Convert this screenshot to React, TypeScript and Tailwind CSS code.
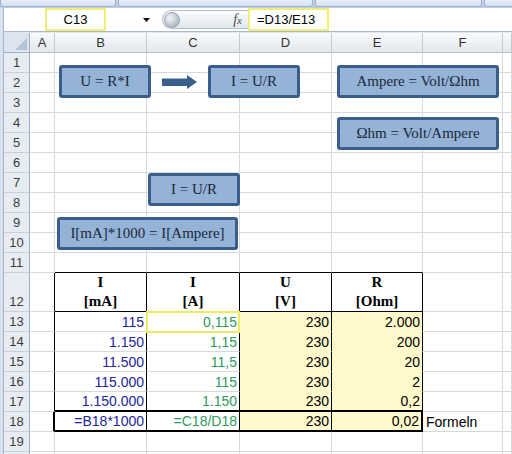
import React from 'react';

const SANS = "font-['Liberation_Sans',Arial,sans-serif]";
const SERIF = "font-['Liberation_Serif','Times_New_Roman',serif]";

const W = ['w-[25px]', 'w-[92px]', 'w-[93px]', 'w-[92px]', 'w-[91px]', 'w-[80px]', 'flex-1'];
const LETTERS = ['A', 'B', 'C', 'D', 'E', 'F', ''];

const GR = 'border-r border-r-[#d6dae0]';
const GB = 'border-b border-b-[#d6dae0]';
const YEL = 'bg-[#fff9cc]';
const BLUE = 'text-[#24249a]';
const GREEN = 'text-[#2f9a5c]';

type Spec = { r: string; b: string; bg: string; content: React.ReactNode; sel?: boolean };

function Num({ v, color = 'text-black' }: { v: string; color?: string }) {
  return (
    <div className={`h-full flex items-end justify-end pr-[2px] leading-[17px] text-[14px] ${color}`}>{v}</div>
  );
}

function Head({ a, b }: { a: string; b: string }) {
  return (
    <div className={`h-full flex flex-col justify-end items-center ${SERIF} font-bold text-[15px] leading-[19px] text-black`}>
      <span>{a}</span>
      <span>{b}</span>
    </div>
  );
}

const DATA: Record<number, string[]> = {
  13: ['115', '0,115', '230', '2.000'],
  14: ['1.150', '1,15', '230', '200'],
  15: ['11.500', '11,5', '230', '20'],
  16: ['115.000', '115', '230', '2'],
  17: ['1.150.000', '1.150', '230', '0,2'],
  18: ['=B18*1000', '=C18/D18', '230', '0,02'],
};

function specsFor(row: number): Spec[] {
  const s: Spec[] = W.map(() => ({ r: GR, b: GB, bg: '', content: null }));
  if (row === 11) for (let i = 1; i <= 4; i++) s[i].b = 'border-b border-b-black';
  if (row >= 12 && row <= 17) {
    s[0].r = 'border-r border-r-black';
    for (let i = 1; i <= 4; i++) s[i].r = 'border-r border-r-black';
  }
  if (row === 12) {
    for (let i = 1; i <= 4; i++) s[i].b = 'border-b border-b-black';
    s[1].content = <Head a="I" b="[mA]" />;
    s[2].content = <Head a="I" b="[A]" />;
    s[3].content = <Head a="U" b="[V]" />;
    s[4].content = <Head a="R" b="[Ohm]" />;
  }
  if (row >= 13 && row <= 18) {
    const d = DATA[row];
    s[1].content = <Num v={d[0]} color={BLUE} />;
    s[2].content = <Num v={d[1]} color={GREEN} />;
    s[3].content = <Num v={d[2]} />;
    s[4].content = <Num v={d[3]} />;
    s[3].bg = YEL;
    s[4].bg = YEL;
    if (row <= 16) {
      s[3].b = 'border-b border-b-[#fff9cc]';
      s[4].b = 'border-b border-b-[#fff9cc]';
    }
  }
  if (row === 13) s[2].sel = true;
  if (row === 17) for (let i = 1; i <= 4; i++) s[i].b = 'border-b-2 border-b-black';
  if (row === 18) {
    s[0].r = 'border-r-2 border-r-black';
    for (let i = 1; i <= 3; i++) s[i].r = 'border-r border-r-black';
    s[4].r = 'border-r-2 border-r-black';
    for (let i = 1; i <= 4; i++) s[i].b = 'border-b-2 border-b-black';
    s[5].content = (
      <div className="h-full flex items-end pl-[3px] leading-[17px] text-[14px] text-black">Formeln</div>
    );
  }
  return s;
}

function Row({ n, label = true }: { n: number; label?: boolean }) {
  const specs = specsFor(n);
  const h = n === 12 ? 'h-[39px]' : 'h-[20px]';
  return (
    <div className={`flex ${h} shrink-0`}>
      <div className="w-[26px] shrink-0 h-full flex items-end justify-center pb-[1px] leading-[17px] text-[13px] text-[#3c3c3c] bg-[#e7ecf3] border-r border-r-[#9fb1c6] border-b border-b-[#c6ced9]">
        {label ? n : ''}
      </div>
      {specs.map((s, i) => (
        <div key={i} className={`${W[i]} shrink-0 h-full ${s.sel ? 'relative' : ''} ${s.r} ${s.b} ${s.bg}`}>
          {s.content}
          {s.sel && (
            <div className="absolute -left-[1px] -top-[1px] -right-[1px] -bottom-[2px] border-2 border-[#eeec5e] z-10" />
          )}
        </div>
      ))}
    </div>
  );
}

function Shape({ cls, children }: { cls: string; children: React.ReactNode }) {
  return (
    <div
      className={`absolute flex items-center justify-center border-[3px] border-[#3a5e8b] bg-[#95b3d7] rounded-[3px] text-[15px] text-[#1a2838] whitespace-nowrap ${SERIF} ${cls}`}
    >
      {children}
    </div>
  );
}

export default function App() {
  const rows = Array.from({ length: 19 }, (_, i) => i + 1);
  return (
    <div className={`relative w-[512px] h-[454px] overflow-hidden bg-white ${SANS} flex flex-col`}>
      {/* ribbon bottom */}
      <div className="h-[8px] shrink-0 flex gap-[2px] bg-[#bccde4]">
        <div className="w-[116px] h-[7px] bg-linear-to-b from-[#e6eef8] to-[#d5e1f0] border border-t-0 border-[#9fb4d0] rounded-b-[3px]" />
        <div className="w-[195px] h-[7px] bg-linear-to-b from-[#e6eef8] to-[#d5e1f0] border border-t-0 border-[#9fb4d0] rounded-b-[3px]" />
        <div className="w-[167px] h-[7px] bg-linear-to-b from-[#e6eef8] to-[#d5e1f0] border border-t-0 border-[#9fb4d0] rounded-b-[3px]" />
        <div className="flex-1 h-[7px] bg-linear-to-b from-[#e6eef8] to-[#d5e1f0] border border-t-0 border-r-0 border-[#9fb4d0] rounded-bl-[3px]" />
      </div>
      <div className="flex flex-1 min-h-0">
        {/* window left edge */}
        <div className="w-[4px] shrink-0 bg-[#d8e2ee] border-r border-r-[#a3b4c9]" />
        <div className="flex-1 flex flex-col min-w-0 overflow-hidden">
          {/* formula bar */}
          <div className="h-[24px] shrink-0 flex items-stretch bg-white border-b border-b-[#a9b7c9]">
            <div className="w-[41px] shrink-0" />
            <div className="w-[61px] shrink-0 border-2 border-[#f1ef72] flex items-center justify-center text-[13px] text-black">
              C13
            </div>
            <div className="w-[44px] shrink-0 flex items-center justify-end">
              <svg width="7" height="4" viewBox="0 0 7 4">
                <path d="M0 0 L7 0 L3.5 4 Z" fill="#111" />
              </svg>
            </div>
            <div className="w-[12px] shrink-0" />
            <div className="w-[86px] shrink-0 my-[2px] flex items-center rounded-l-full border border-r-0 border-[#b3bfcd] bg-linear-to-b from-[#fbfcfd] to-[#e1e7ee]">
              <div className="w-[16px] h-[16px] ml-[1px] rounded-full border border-[#9aa6b4] bg-radial-[at_35%_35%] from-[#f4f6f8] via-[#c5ccd5] to-[#98a3b0]" />
              <div className="flex-1" />
              <span className={`${SERIF} italic text-[14px] text-[#4a4a4a] pr-[6px] leading-none`}>
                f<span className="text-[11px]">x</span>
              </span>
            </div>
            <div className="w-[81px] shrink-0 border-2 border-[#f1ef72] flex items-center pl-[7px] text-[13px] text-black">
              =D13/E13
            </div>
            <div className="flex-1" />
          </div>
          <div className="h-[1px] shrink-0 bg-[#dfe6ef]" />
          {/* column headers */}
          <div className="h-[20px] shrink-0 flex">
            <div className="w-[26px] shrink-0 h-full bg-[#dde4ed] border-r border-r-[#9fb1c6] border-b border-b-[#9fb1c6] flex items-end justify-end p-[2px]">
              <svg width="12" height="12" viewBox="0 0 12 12">
                <path d="M12 0 L12 12 L0 12 Z" fill="#b4c3d6" />
              </svg>
            </div>
            {W.map((w, i) => (
              <div
                key={i}
                className={`${w} shrink-0 h-full flex items-center justify-center text-[13px] text-[#333] bg-linear-to-b from-[#f9fafb] to-[#e3e7ec] border-r border-r-[#c3cad3] border-b border-b-[#b5c0cd]`}
              >
                {LETTERS[i]}
              </div>
            ))}
          </div>
          {/* rows */}
          {rows.map((n) => (
            <Row key={n} n={n} />
          ))}
          <Row n={20} label={false} />
        </div>
      </div>

      {/* floating shapes */}
      <Shape cls="left-[59px] top-[65px] w-[92px] h-[33px]">U = R*I</Shape>
      <svg className="absolute left-[162px] top-[75px]" width="36" height="14" viewBox="0 0 36 14">
        <rect x="0" y="3.5" width="26" height="7.5" fill="#3a5f8c" />
        <path d="M25 0 L35 7 L25 14 Z" fill="#3a5f8c" />
      </svg>
      <Shape cls="left-[208px] top-[65px] w-[92px] h-[33px]">I = U/R</Shape>
      <Shape cls="left-[337px] top-[65px] w-[162px] h-[33px]">Ampere = Volt/Ωhm</Shape>
      <Shape cls="left-[337px] top-[117px] w-[162px] h-[33px]">Ωhm = Volt/Ampere</Shape>
      <Shape cls="left-[148px] top-[173px] w-[92px] h-[33px]">I = U/R</Shape>
      <Shape cls="left-[57px] top-[217px] w-[181px] h-[33px]">I[mA]*1000 = I[Ampere]</Shape>
    </div>
  );
}
